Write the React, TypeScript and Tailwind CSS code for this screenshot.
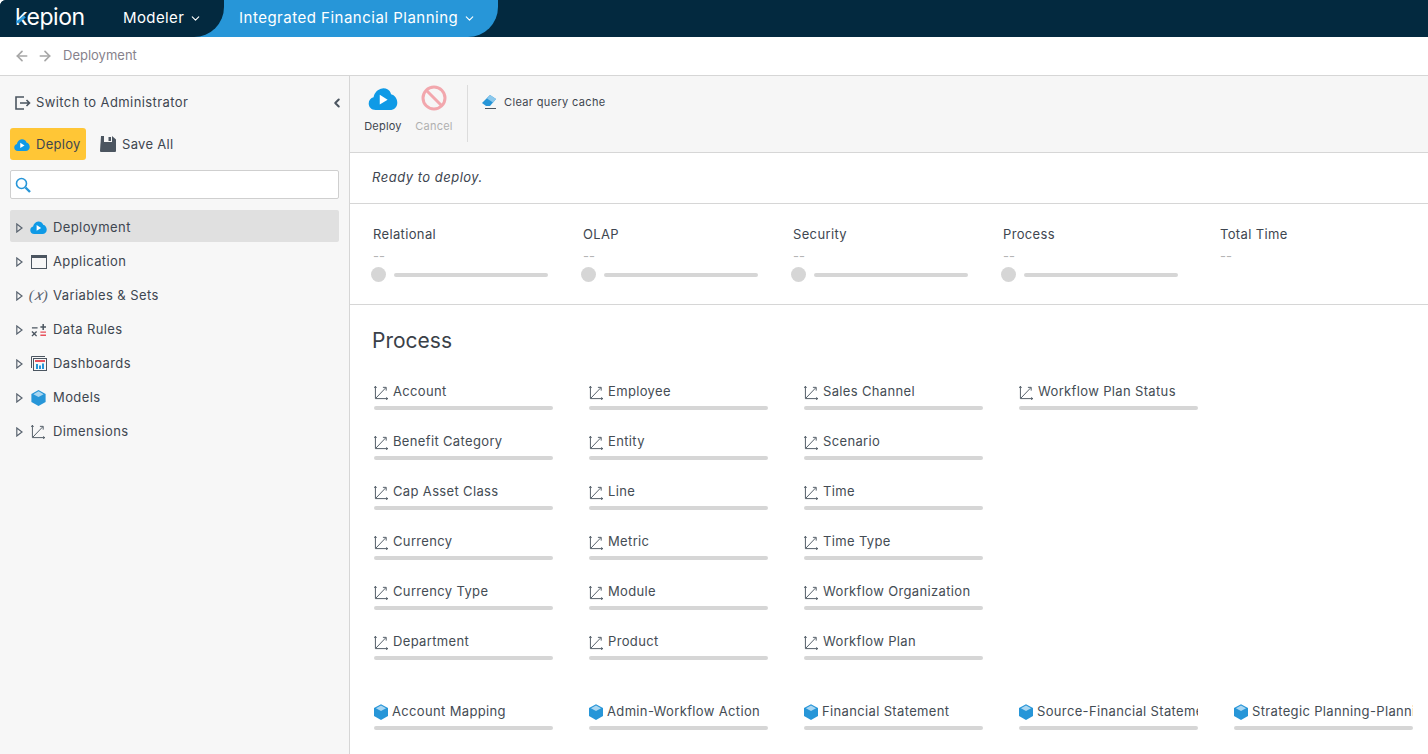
import { ChevronDown, ChevronLeft, ArrowLeft, ArrowRight } from "lucide-react";

const font = "font-['Inter','Liberation_Sans',sans-serif]";

const CloudPlay = ({ className = "" }: { className?: string }) => (
  <svg viewBox="0 0 32 26" className={className}>
    <path
      d="M8 25C3.500 25 .5 22 .5 18c0-3.400 2.200-6 5.300-6.800C6.500 6 10.500 2 15.500 1.500c4-.3 7.600 1.800 9 5.200 0 .5-.1 1 .3 1.200 3.800.8 6.700 4.700 6.700 9.100 0 4.500-3.500 8-8 8z"
      fill="#0f9ae6"
    />
    <path d="M12.500 8.500v10.500l8.500-5.250z" fill="#fff" />
  </svg>
);

const Cube = ({ className = "" }: { className?: string }) => (
  <svg viewBox="0 0 16 18" className={className}>
    <path d="M8 0 16 4.500V13.500L8 18 0 13.500V4.500z" fill="#2796d8" />
    <path d="M8 1.500 13.800 4.700 8 7.900 2.200 4.700z" fill="#a9d6f1" />
  </svg>
);

const Axis = ({ className = "" }: { className?: string }) => (
  <svg viewBox="0 0 16 16" fill="none" stroke="#4b5560" strokeWidth="1" className={className}>
    <path d="M1.500 1.500v13h13" />
    <path d="M.3 3 1.500 1.300 2.700 3M13 13.300l1.700 1.200-1.700 1.200" />
    <path d="M2 14 12.500 3M9.500 2.500h3.500v3.500" />
  </svg>
);

const tree: { label: string; icon: React.ReactNode; active?: boolean }[] = [
  { label: "Deployment", icon: <CloudPlay className="w-[17px] h-[15px]" />, active: true },
  {
    label: "Application",
    icon: (
      <svg viewBox="0 0 16 14" className="w-[16px] h-[14px]" fill="none">
        <rect x=".5" y=".5" width="15" height="13" stroke="#4b5560" />
        <rect x="0" y="0" width="16" height="3" fill="#4b5560" />
      </svg>
    ),
  },
  {
    label: "Variables & Sets",
    icon: <span className="font-['Liberation_Serif',serif] italic text-[15px] leading-none tracking-[0.5px] text-[#5a6470] whitespace-nowrap">(𝑥)</span>,
  },
  {
    label: "Data Rules",
    icon: (
      <svg viewBox="0 0 16 14" className="w-[15px] h-[14px]">
        <path d="M1 4h6v1.500H1zM10 3h2.200V.5h1.600V3H16v1.500h-2.200V7h-1.600V4.500H10z" fill="#4b5560" />
        <path d="M1.500 8 3.500 10l2-2 1 1-2 2 2 2-1 1-2-2-2 2-1-1 2-2-2-2z" fill="#4b5560" />
        <path d="M10 8.500h6V10h-6zM10 11.800h6v1.600h-6z" fill="#e8505b" />
      </svg>
    ),
  },
  {
    label: "Dashboards",
    icon: (
      <svg viewBox="0 0 16 15" className="w-[16px] h-[15px]" fill="none">
        <path d="M.5 12V.5H14" stroke="#4b5560" />
        <rect x="2.500" y="2.500" width="13" height="12" stroke="#4b5560" />
        <rect x="4" y="4" width="10" height="2" fill="#e8505b" />
        <path d="M5 8h2v5H5zM8 9.500h2V13H8zM11 7.500h2V13h-2z" fill="#2796d8" />
      </svg>
    ),
  },
  { label: "Models", icon: <Cube className="w-[15px] h-[16px]" /> },
  { label: "Dimensions", icon: <Axis className="w-[15px] h-[15px]" /> },
];

const stats = [
  { label: "Relational", w: "w-[210px]", bar: true },
  { label: "OLAP", w: "w-[210px]", bar: true },
  { label: "Security", w: "w-[210px]", bar: true },
  { label: "Process", w: "w-[217px]", bar: true },
  { label: "Total Time", w: "w-[180px]", bar: false },
];

const dims = [
  "Account", "Benefit Category", "Cap Asset Class", "Currency", "Currency Type", "Department",
  "Employee", "Entity", "Line", "Metric", "Module", "Product",
  "Sales Channel", "Scenario", "Time", "Time Type", "Workflow Organization", "Workflow Plan",
  "Workflow Plan Status",
];

const models = [
  "Account Mapping",
  "Admin-Workflow Action",
  "Financial Statement",
  "Source-Financial Statement",
  "Strategic Planning-Planning",
];

const ProcessItem = ({ label, icon }: { label: string; icon: React.ReactNode }) => (
  <div className="w-[179px] h-[50px] ml-[1px]">
    <div className="flex items-center gap-[4px] h-[20px] pt-[2px] overflow-hidden whitespace-nowrap text-[13px] tracking-[0.35px] text-[#444c54]">
      <span className="shrink-0">{icon}</span>
      {label}
    </div>
    <div className="h-[4px] mt-[5px] rounded-full bg-[#d6d6d6]" />
  </div>
);

export default function App() {
  return (
    <div className={`${font} w-[1428px] h-[754px] overflow-hidden bg-white flex flex-col text-[#3e4650]`}>
      {/* Top bar */}
      <div className="h-[37px] shrink-0 bg-[#03293f] rounded-tl-[6px] flex text-white">
        <div className="relative z-10 w-[224px] rounded-tl-[6px] rounded-br-[30px] bg-[#03293f] flex items-center">
          <div className="relative ml-[15px] w-[90px] text-[23px] leading-none tracking-[-0.5px] -mt-[3px]">
            kepion
            <span className="absolute left-[1px] top-[12px] w-[10px] h-[3px] bg-[#2796d8] -rotate-[40deg]" />
          </div>
          <span className="ml-[18px] text-[15px] tracking-[0.4px]">Modeler</span>
          <ChevronDown className="ml-[5px] w-[13px] h-[13px]" />
        </div>
        <div className="-ml-[30px] w-[304px] pl-[45px] rounded-br-[30px] bg-[#2796d8] flex items-center">
          <span className="text-[15px] tracking-[0.5px] whitespace-nowrap">Integrated Financial Planning</span>
          <ChevronDown className="ml-[5px] w-[13px] h-[13px]" />
        </div>
      </div>

      {/* Breadcrumb */}
      <div className="h-[39px] shrink-0 border-b border-[#d6d6d6] flex items-center pl-[14px] text-[13px] text-[#87828c]">
        <ArrowLeft className="w-[16px] h-[16px] text-[#a6a6a6]" strokeWidth={2.500} />
        <ArrowRight className="ml-[7px] w-[16px] h-[16px] text-[#a6a6a6]" strokeWidth={2.500} />
        <span className="ml-[10px]">Deployment</span>
      </div>

      <div className="flex flex-1 min-h-0">
        {/* Sidebar */}
        <div className="w-[350px] shrink-0 bg-[#f7f7f7] border-r border-[#d6d6d6] pl-[10px] pr-[10px]">
          <div className="h-[53px] flex items-center pl-[5px] text-[13px] tracking-[0.4px]">
            <svg viewBox="0 0 16 14" className="w-[16px] h-[14px]" fill="none" stroke="#4b5560" strokeWidth="1.600">
              <path d="M9 1H1v12h8M5 7h9.500M11.500 4l3 3-3 3" />
            </svg>
            <span className="ml-[5px]">Switch to Administrator</span>
            <ChevronLeft className="ml-auto -mr-[5px] w-[14px] h-[14px] text-[#4b5560]" strokeWidth={3.500} />
          </div>
          <div className="flex items-center h-[32px] mt-[-1px] text-[13px] tracking-[0.3px]">
            <div className="w-[76px] h-[32px] pt-[1px] bg-[#ffc636] rounded-[3px] flex items-center pl-[4px]">
              <CloudPlay className="w-[16px] h-[14px]" />
              <span className="ml-[6px]">Deploy</span>
            </div>
            <svg viewBox="0 0 16 16" className="ml-[14px] w-[16px] h-[16px]">
              <path d="M1 0h11l4 3.500V15a1 1 0 0 1-1 1H1a1 1 0 0 1-1-1z" fill="#4b5560" />
              <path d="M4 0h8v6H4z" fill="#f7f7f7" />
              <path d="M8.500 1H11v4H8.500z" fill="#4b5560" />
            </svg>
            <span className="ml-[6px] pt-[1px]">Save All</span>
          </div>
          <div className="mt-[10px] h-[29px] w-[329px] bg-white border border-[#cfcfcf] rounded-[2px] flex items-center pl-[4px]">
            <svg viewBox="0 0 16 16" className="w-[16px] h-[16px]" fill="none" stroke="#2796d8">
              <circle cx="6.500" cy="6.500" r="5" strokeWidth="1.600" />
              <path d="M10.500 10.500 15 15" strokeWidth="2.400" />
            </svg>
          </div>
          <div className="mt-[11px] w-[329px]">
            {tree.map((t) => (
              <div
                key={t.label}
                className={`h-[32px] mb-[2px] pt-[3px] flex items-center pl-[6px] rounded-[2px] text-[13px] tracking-[0.4px] ${t.active ? "bg-[#e0e0e0]" : ""}`}
              >
                <svg viewBox="0 0 7 10" className="w-[7px] h-[10px]" fill="none" stroke="#5a6470" strokeWidth="1.200">
                  <path d="M.8 1 6 5 .8 9z" />
                </svg>
                <span className="ml-[7px] w-[17px] flex items-center justify-center">{t.icon}</span>
                <span className="ml-[6px]">{t.label}</span>
              </div>
            ))}
          </div>
        </div>

        {/* Main */}
        <div className="flex-1 min-w-0 flex flex-col">
          <div className="h-[77px] shrink-0 bg-[#f6f6f6] border-b border-[#d6d6d6] flex pt-[9px]">
            <div className="w-[118px] h-[57px] border-r border-[#dcdcdc] flex pl-[14px] gap-[12px] text-[11px] tracking-[0.2px]">
              <div className="flex flex-col items-center w-[38px] pt-[2px]">
                <CloudPlay className="w-[30px] h-[24px]" />
                <span className="mt-[7px]">Deploy</span>
              </div>
              <div className="flex flex-col items-center w-[40px] text-[#b0b0b0]">
                <svg viewBox="0 0 26 26" className="w-[26px] h-[26px]" fill="none" stroke="#f2a7ad" strokeWidth="3">
                  <circle cx="13" cy="13" r="11" />
                  <path d="M5 5l16 16" />
                </svg>
                <span className="mt-[7px]">Cancel</span>
              </div>
            </div>
            <div className="flex items-start pl-[14px] pt-[9px] text-[11px] tracking-[0.35px]">
              <svg viewBox="0 0 15 15" className="w-[15px] h-[15px]">
                <path d="M0 9 8 1l6 4-6 7H4z" fill="#2796d8" />
                <path d="M8 1l6 4-3 3.500-6-4z" fill="#8cc8ec" />
                <path d="M3 14h11v1H3z" fill="#4b5560" />
              </svg>
              <span className="ml-[7px]">Clear query cache</span>
            </div>
          </div>

          <div className="h-[51px] shrink-0 border-b border-[#d6d6d6] flex items-center pl-[22px] text-[13px] tracking-[0.5px] italic">
            Ready to deploy.
          </div>

          <div className="h-[101px] shrink-0 border-b border-[#d6d6d6] flex pl-[23px] pt-[20px]">
            {stats.map((s) => (
              <div key={s.label} className={s.w}>
                <div className="text-[13px] leading-[20px] tracking-[0.35px]">{s.label}</div>
                <div className="text-[13px] leading-[20px] mt-[2px] text-[#b5b5b5]">--</div>
                {s.bar && (
                  <div className="flex items-center mt-[1px] -ml-[2px]">
                    <div className="w-[15px] h-[15px] rounded-full bg-[#d6d6d6]" />
                    <div className="ml-[8px] w-[154px] h-[4px] rounded-full bg-[#d6d6d6]" />
                  </div>
                )}
              </div>
            ))}
          </div>

          <div className="pl-[23px] pt-[22px]">
            <div className="-ml-[1px] text-[21px] leading-[28px] text-[#3a4148]">Process</div>
            <div className="mt-[26px] grid grid-flow-col grid-rows-6 auto-cols-[215px]">
              {dims.map((d) => (
                <ProcessItem key={d} label={d} icon={<Axis className="w-[15px] h-[15px]" />} />
              ))}
            </div>
            <div className="mt-[20px] grid grid-flow-col auto-cols-[215px]">
              {models.map((m) => (
                <ProcessItem key={m} label={m} icon={<Cube className="w-[14px] h-[16px]" />} />
              ))}
            </div>
          </div>
        </div>
      </div>
    </div>
  );
}
